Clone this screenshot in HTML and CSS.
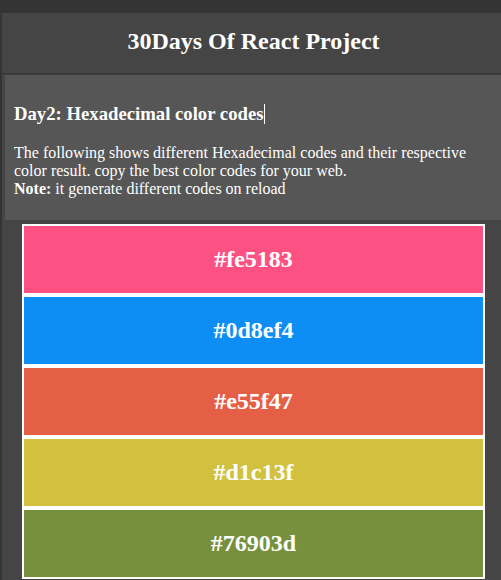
FILE: index.html
```html
<!DOCTYPE html>
<html>
<head>
<meta charset="utf-8">
<link rel="stylesheet" href="styles.css">
</head>
<body>
<div class="app">
  <header class="header">
    <h1 class="title">30Days Of React Project</h1>
  </header>
  <section class="intro">
    <h3 class="intro-title">Day2: Hexadecimal color codes<span class="caret"></span></h3>
    <p class="intro-text">The following shows different Hexadecimal codes and their respective color result. copy the best color codes for your web.<br><strong>Note:</strong> it generate different codes on reload</p>
  </section>
  <div class="colors">
    <div class="color" style="background:#fe5183">#fe5183</div>
    <div class="color" style="background:#0d8ef4">#0d8ef4</div>
    <div class="color" style="background:#e55f47">#e55f47</div>
    <div class="color" style="background:#d1c13f">#d1c13f</div>
    <div class="color" style="background:#76903d">#76903d</div>
  </div>
</div>
</body>
</html>
```
FILE: styles.css
```css
html, body {
  margin: 0;
  padding: 0;
}
body {
  background: #343434;
  padding: 13px 0 0 2px;
  font-family: "Liberation Serif", "Times New Roman", serif;
  color: #fff;
  overflow: hidden;
  height: 580px;
  box-sizing: border-box;
}
.app {
  background: #454545;
  min-height: 600px;
}
.header {
  height: 60px;
  display: flex;
  align-items: center;
  justify-content: center;
  padding-left: 4px;
  border-bottom: 2px solid #3b3b3b;
}
.title {
  margin: 0;
  font-size: 24px;
  font-weight: bold;
  line-height: 28px;
  padding-bottom: 4px;
}
.intro {
  margin-left: 3px;
  background: #565656;
  padding: 10px 9px 6px;
}
.intro-title {
  font-size: 18.72px;
  margin: 18px 0 20px;
  line-height: 21px;
}
.caret {
  display: inline-block;
  width: 1px;
  height: 20px;
  background: #fff;
  vertical-align: -4px;
}
.intro-text {
  font-size: 16px;
  line-height: 18px;
  margin: 0 0 16px;
}
.colors {
  padding: 4px 0 0 20px;
}
.color {
  width: 459px;
  height: 67px;
  border: 2px solid #fff;
  display: flex;
  align-items: center;
  justify-content: center;
  font-size: 24px;
  font-weight: bold;
}
```
